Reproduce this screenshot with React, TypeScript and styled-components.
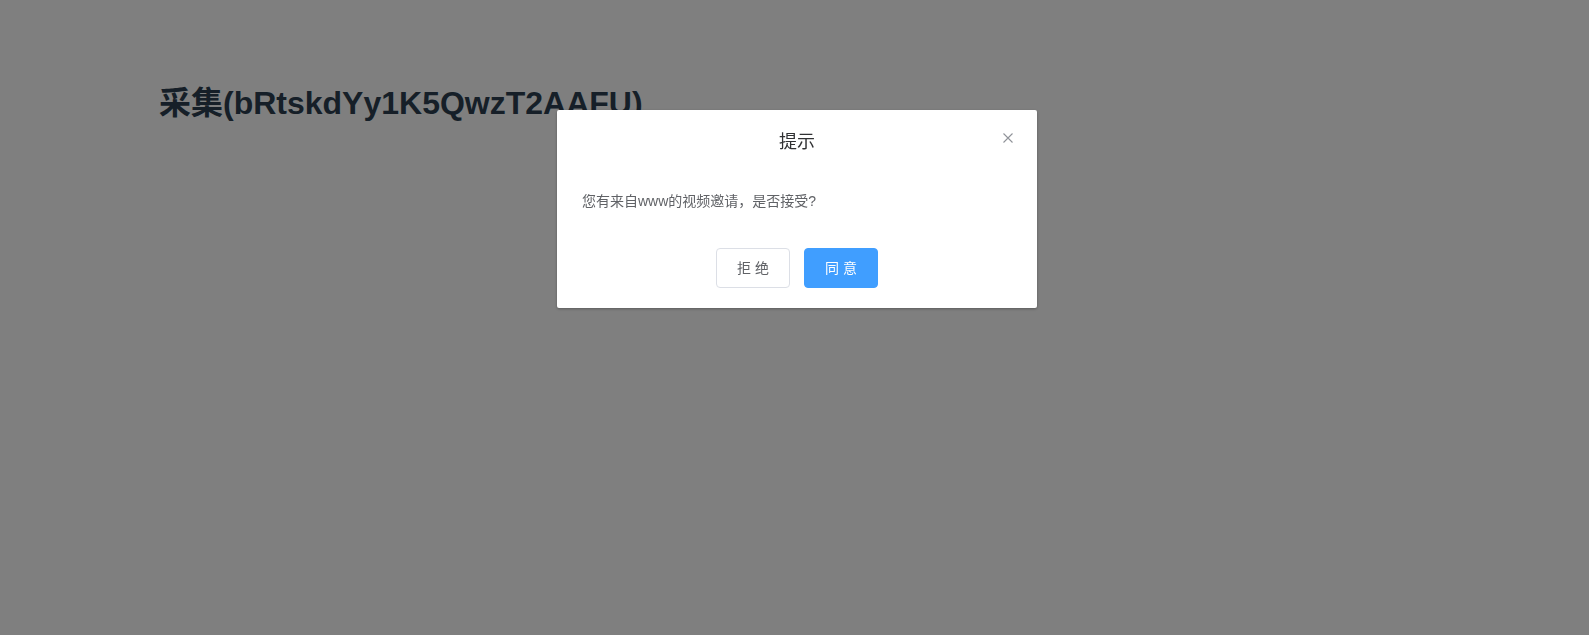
import styled, { createGlobalStyle } from 'styled-components';

const GlobalStyle = createGlobalStyle`
  * {
    margin: 0;
    padding: 0;
    box-sizing: border-box;
  }

  body {
    font-family: 'Liberation Sans', Arial, 'Noto Sans CJK SC', sans-serif;
    background: #ffffff;
    color: #2c3e50;
    -webkit-font-smoothing: antialiased;
  }
`;

const Page = styled.div`
  min-height: 100vh;
  padding: 85px 159px 0;
`;

const Title = styled.h1`
  font-size: 32px;
  line-height: 37px;
  font-weight: 700;
  color: #2c3e50;
`;

const Overlay = styled.div`
  position: fixed;
  inset: 0;
  background: rgba(0, 0, 0, 0.5);
`;

const DialogWrapper = styled.div`
  position: fixed;
  inset: 0;
  display: flex;
  justify-content: center;
  align-items: flex-start;
  padding: 110px 0 0 5px;
`;

const Dialog = styled.div`
  position: relative;
  width: 480px;
  background: #fff;
  border-radius: 2px;
  box-shadow: 0 1px 3px rgba(0, 0, 0, 0.3);
`;

const DialogHeader = styled.div`
  padding: 20px 20px 10px;
  text-align: center;
`;

const DialogTitle = styled.span`
  font-size: 18px;
  line-height: 24px;
  color: #303133;
`;

const CloseButton = styled.button`
  position: absolute;
  top: 20px;
  right: 21px;
  width: 16px;
  height: 16px;
  display: flex;
  align-items: center;
  justify-content: center;
  border: none;
  background: transparent;
  cursor: pointer;
`;

const DialogBody = styled.div`
  padding: 25px 25px;
  font-size: 14px;
  line-height: 24px;
  color: #606266;
`;

const DialogFooter = styled.div`
  display: flex;
  justify-content: center;
  gap: 14px;
  padding: 10px 20px 20px;
`;

const Button = styled.button<{ $primary?: boolean }>`
  height: 40px;
  padding: 0 20px;
  font-family: inherit;
  font-size: 14px;
  line-height: 1;
  border-radius: 4px;
  border: 1px solid ${(p) => (p.$primary ? '#409eff' : '#dcdfe6')};
  background: ${(p) => (p.$primary ? '#409eff' : '#fff')};
  color: ${(p) => (p.$primary ? '#fff' : '#606266')};
  cursor: pointer;
  white-space: pre;
`;

function App() {
  return (
    <>
      <GlobalStyle />
      <Page>
        <Title>采集(bRtskdYy1K5QwzT2AAFU)</Title>
      </Page>
      <Overlay />
      <DialogWrapper>
        <Dialog>
          <DialogHeader>
            <DialogTitle>提示</DialogTitle>
          </DialogHeader>
          <CloseButton aria-label="关闭">
            <svg width="10" height="10" viewBox="0 0 10 10">
              <path d="M0.5 0.5 L9.5 9.5 M9.5 0.5 L0.5 9.5" stroke="#909399" strokeWidth="1.1" fill="none" />
            </svg>
          </CloseButton>
          <DialogBody>您有来自www的视频邀请，是否接受?</DialogBody>
          <DialogFooter>
            <Button>拒 绝</Button>
            <Button $primary>同 意</Button>
          </DialogFooter>
        </Dialog>
      </DialogWrapper>
    </>
  );
}

export default App;
